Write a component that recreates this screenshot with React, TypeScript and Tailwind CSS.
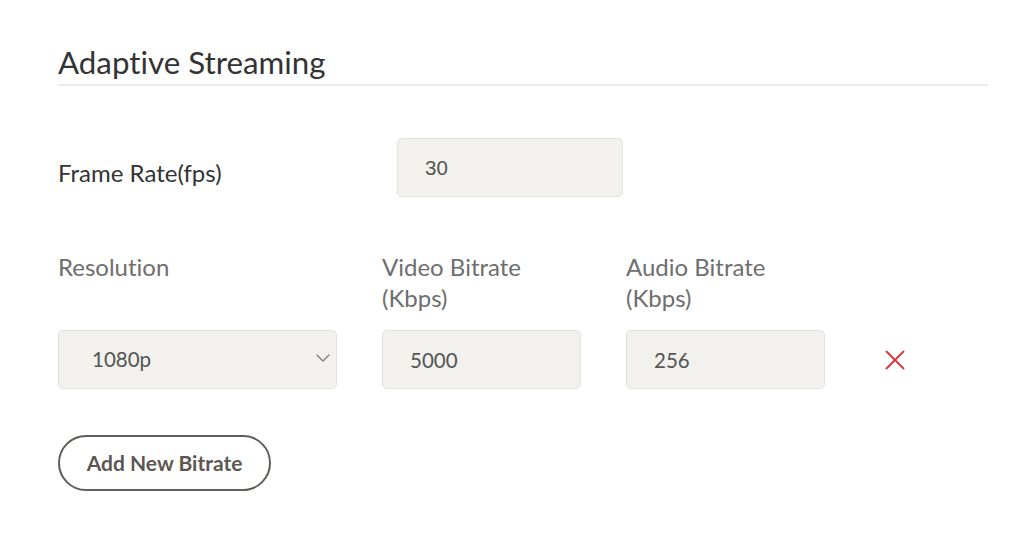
import { ChevronDown, X } from 'lucide-react';

const inputCls =
  'h-[59px] rounded-[5px] border border-[#e4e2dd] bg-[#f2f1ed] px-[27px] text-[20.5px] text-[#555] outline-none';

export default function App() {
  return (
    <div className="min-h-[542px] bg-white font-['Lato',sans-serif] [font-variant-ligatures:none]">
      <div className="ml-[58px] w-[930px] pt-[44px]">
        {/* Heading */}
        <h2 className="border-b-2 border-[#ebebeb] pb-[4px] text-[31.3px] leading-[36px] text-[#333]">
          Adaptive Streaming
        </h2>

        {/* Frame rate */}
        <div className="mt-[52px] flex">
          <label className="mt-[19px] w-[339px] text-[24px] leading-[31px] text-[#333]">
            Frame Rate(fps)
          </label>
          <input
            readOnly
            value="30"
            className={`${inputCls} w-[226px] font-['Liberation_Sans',sans-serif] text-[19.5px]`}
          />
        </div>

        {/* Bitrate table */}
        <div className="mt-[54px] grid grid-cols-[279px_199px_199px_auto] gap-x-[45px] gap-y-[17px] text-[24px] leading-[31px] text-[#6e6e6e]">
          <div>Resolution</div>
          <div>
            Video Bitrate
            <br />
            (Kbps)
          </div>
          <div>
            Audio Bitrate
            <br />
            (Kbps)
          </div>
          <div />

          <div className="relative">
            <select
              defaultValue="1080p"
              className={`${inputCls} w-full appearance-none pl-[33px] font-['Lato',sans-serif]`}
            >
              <option>720p</option>
              <option>1080p</option>
              <option>1440p</option>
            </select>
            <ChevronDown
              className="pointer-events-none absolute right-[2px] top-[16px] h-[24px] w-[24px] text-[#777]"
              strokeWidth={1.2}
            />
          </div>
          <input readOnly value="5000" className={`${inputCls} w-full`} />
          <input readOnly value="256" className={`${inputCls} w-full`} />
          <div className="flex items-center pl-[8px]">
            <button className="text-[#d43a40]">
              <X className="h-[34px] w-[34px]" strokeWidth={1.35} />
            </button>
          </div>
        </div>

        {/* Add button */}
        <button className="mt-[46px] h-[56px] w-[213px] rounded-full border-[2.5px] border-[#625d58] text-[21px] font-bold text-[#5c5752]">
          Add New Bitrate
        </button>
      </div>
    </div>
  );
}
